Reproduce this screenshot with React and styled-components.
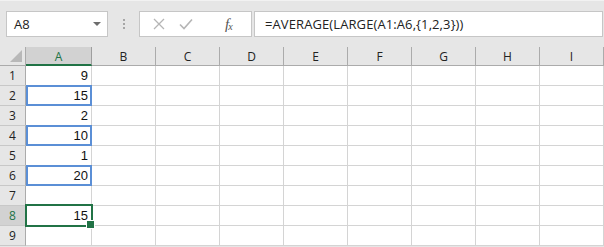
import React from 'react';
import styled, { createGlobalStyle } from 'styled-components';

const GlobalStyle = createGlobalStyle`
  html, body {
    margin: 0;
    padding: 0;
    background: #e6e6e6;
  }
  * {
    box-sizing: border-box;
  }
`;

const Sheet = styled.div`
  width: 604px;
  height: 247px;
  overflow: hidden;
  background: #e6e6e6;
  font-family: "Liberation Sans", Arial, sans-serif;
`;

const FormulaBar = styled.div`
  display: flex;
  align-items: center;
  height: 47px;
  padding: 0 1px 0 6px;
  border-top: 1px solid #f2f2f2;
`;

const NameBox = styled.div`
  width: 102px;
  height: 26px;
  display: flex;
  align-items: center;
  justify-content: space-between;
  padding: 0 6px 0 7px;
  background: #fff;
  border: 1px solid #c6c6c6;
  font-family: "Open Sans", "Noto Sans", sans-serif;
  font-size: 13px;
  color: #222;
`;

const Caret = styled.span`
  width: 0;
  height: 0;
  border-left: 4px solid transparent;
  border-right: 4px solid transparent;
  border-top: 4px solid #6d6d6d;
`;

const Grip = styled.div`
  width: 31px;
  display: flex;
  flex-direction: column;
  align-items: center;
  gap: 2px;

  span {
    width: 2px;
    height: 2px;
    background: #a6a6a6;
  }
`;

const ButtonBox = styled.div`
  width: 113px;
  height: 26px;
  display: flex;
  align-items: center;
  background: #fff;
  border: 1px solid #c6c6c6;
  padding-left: 13px;
  gap: 14px;
`;

const FxLabel = styled.span`
  margin-left: 18px;
  font-family: "Liberation Serif", "Times New Roman", serif;
  font-style: italic;
  font-size: 15px;
  color: #555;
  letter-spacing: -1px;

  sub {
    font-size: 10px;
    vertical-align: -1px;
  }
`;

const FormulaInput = styled.div`
  flex: 1;
  height: 26px;
  margin-left: 2px;
  display: flex;
  align-items: center;
  padding-left: 10px;
  background: #fff;
  border: 1px solid #c6c6c6;
  font-family: "Open Sans", "Noto Sans", sans-serif;
  font-size: 13px;
  letter-spacing: 0.1px;
  color: #222;
`;

const Grid = styled.div`
  display: grid;
  grid-template-columns: 26px 66px repeat(8, 64px);
  grid-template-rows: 19px repeat(9, 20px);
  background: #fff;
`;

const Corner = styled.div`
  position: relative;
  background: #e6e6e6;
  border-right: 1px solid #ababab;
  border-bottom: 1px solid #ababab;

  &::after {
    content: "";
    position: absolute;
    right: 3px;
    bottom: 3px;
    border-left: 12px solid transparent;
    border-bottom: 12px solid #b8b8b8;
  }
`;

const ColHead = styled.div`
  display: flex;
  align-items: center;
  justify-content: center;
  background: ${p => (p.$active ? '#d2d2d2' : '#e6e6e6')};
  border-right: 1px solid ${p => (p.$active ? '#9e9e9e' : '#ababab')};
  border-bottom: ${p => (p.$active ? '2px solid #217346' : '1px solid #ababab')};
  font-family: "Open Sans", "Noto Sans", sans-serif;
  font-size: 12px;
  color: ${p => (p.$active ? '#217346' : '#222')};
  padding-top: 1px;
`;

const RowHead = styled.div`
  display: flex;
  align-items: center;
  justify-content: center;
  background: ${p => (p.$active ? '#d2d2d2' : '#e6e6e6')};
  border-right: 1px solid #ababab;
  border-bottom: 1px solid #c8c8c8;
  font-family: "Open Sans", "Noto Sans", sans-serif;
  font-size: 12px;
  color: ${p => (p.$active ? '#217346' : '#222')};
`;

const Cell = styled.div`
  position: relative;
  display: flex;
  align-items: flex-end;
  justify-content: flex-end;
  padding: 0 3px 2px 0;
  border-right: 1px solid #d4d4d4;
  border-bottom: 1px solid #d4d4d4;
  font-size: 13px;
  color: #111;

  ${p => p.$mark && `
    &::after {
      content: "";
      position: absolute;
      left: 0;
      top: -1px;
      right: -1px;
      bottom: -1px;
      border: 2px solid #5b8fd6;
    }
  `}

  ${p => p.$selected && `
    &::after {
      content: "";
      position: absolute;
      left: -1px;
      top: -2px;
      right: -2px;
      bottom: -2px;
      border: 2px solid #217346;
      z-index: 1;
    }
    &::before {
      content: "";
      position: absolute;
      right: -4px;
      bottom: -4px;
      width: 7px;
      height: 7px;
      background: #217346;
      border: 1px solid #fff;
      z-index: 2;
    }
  `}
`;

const columns = ['A', 'B', 'C', 'D', 'E', 'F', 'G', 'H', 'I'];

const values = {
  1: { v: '9' },
  2: { v: '15', mark: true },
  3: { v: '2' },
  4: { v: '10', mark: true },
  5: { v: '1' },
  6: { v: '20', mark: true },
  7: { v: '' },
  8: { v: '15', selected: true },
  9: { v: '' },
};

function CrossIcon() {
  return (
    <svg width="12" height="12" viewBox="0 0 12 12">
      <path d="M1 1 L11 11 M11 1 L1 11" stroke="#b5b5b5" strokeWidth="1.3" fill="none" />
    </svg>
  );
}

function CheckIcon() {
  return (
    <svg width="14" height="12" viewBox="0 0 14 12">
      <path d="M1 6.5 L5 10.5 L13 1.5" stroke="#b5b5b5" strokeWidth="1.6" fill="none" />
    </svg>
  );
}

export default function App() {
  return (
    <Sheet>
      <GlobalStyle />
      <FormulaBar>
        <NameBox>
          A8
          <Caret />
        </NameBox>
        <Grip>
          <span />
          <span />
          <span />
        </Grip>
        <ButtonBox>
          <CrossIcon />
          <CheckIcon />
          <FxLabel>f<sub>x</sub></FxLabel>
        </ButtonBox>
        <FormulaInput>=AVERAGE(LARGE(A1:A6,{'{'}1,2,3{'}'}))</FormulaInput>
      </FormulaBar>
      <Grid>
        <Corner />
        {columns.map(c => (
          <ColHead key={c} $active={c === 'A'}>{c}</ColHead>
        ))}
        {Object.keys(values).map(r => (
          <React.Fragment key={r}>
            <RowHead $active={r === '8'}>{r}</RowHead>
            <Cell $mark={values[r].mark} $selected={values[r].selected}>{values[r].v}</Cell>
            {columns.slice(1).map(c => (
              <Cell key={c} />
            ))}
          </React.Fragment>
        ))}
      </Grid>
    </Sheet>
  );
}
